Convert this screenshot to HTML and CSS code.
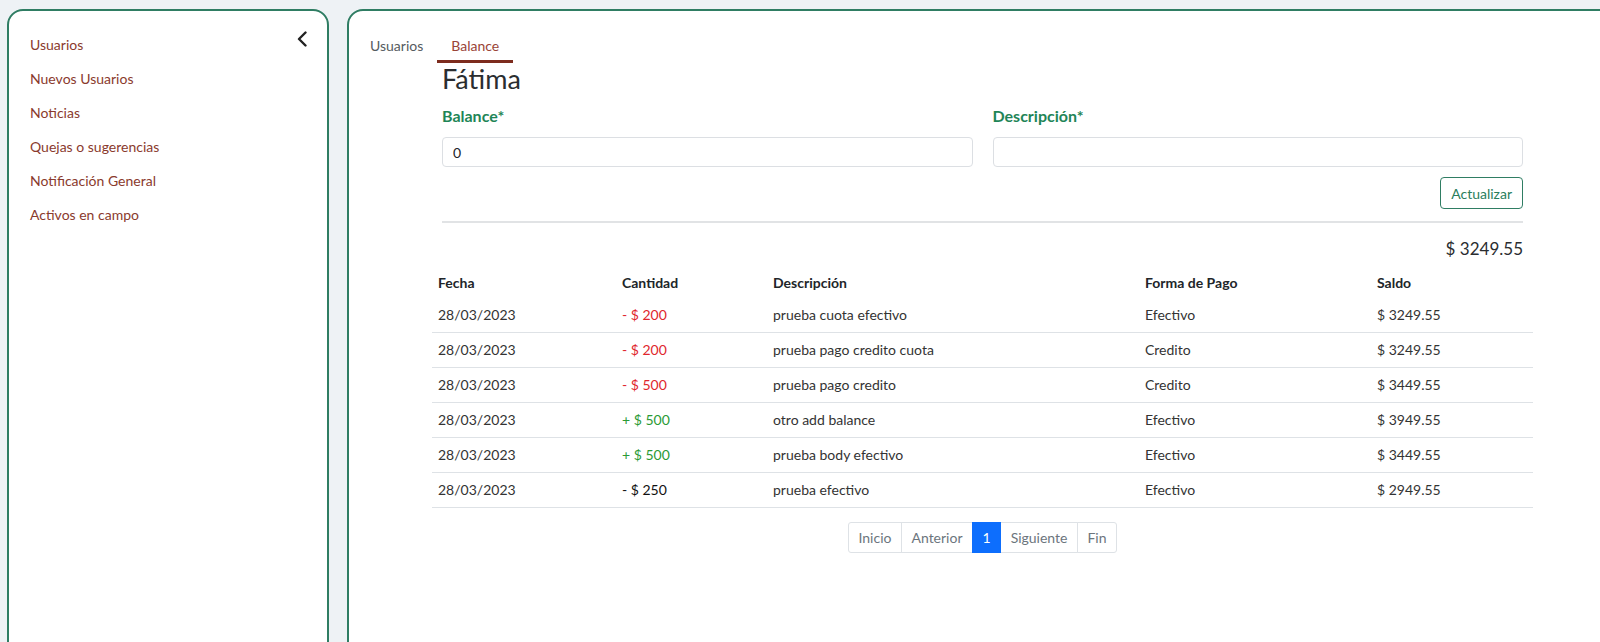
FILE: index.html
```html
<!DOCTYPE html>
<html lang="es">
<head>
<meta charset="utf-8">
<title>Balance</title>
<link rel="stylesheet" href="styles.css">
</head>
<body>
<div class="layout">
  <aside class="sidebar">
    <nav class="side-nav">
      <a href="#">Usuarios</a>
      <a href="#">Nuevos Usuarios</a>
      <a href="#">Noticias</a>
      <a href="#">Quejas o sugerencias</a>
      <a href="#">Notificación General</a>
      <a href="#">Activos en campo</a>
    </nav>
    <button class="collapse-btn" aria-label="Cerrar">
      <svg width="12" height="16" viewBox="0 0 12 16"><path d="M9.5 1.5 L3 8 L9.5 14.5" fill="none" stroke="#222" stroke-width="2.4" stroke-linecap="round" stroke-linejoin="round"/></svg>
    </button>
  </aside>
  <main class="main">
    <div class="tabs">
      <a class="tab" href="#">Usuarios</a>
      <a class="tab active" href="#">Balance</a>
    </div>
    <section class="content">
      <div class="form-area">
        <h3 class="name">Fátima</h3>
        <div class="form-row">
          <div class="field">
            <label class="label">Balance*</label>
            <input class="input" type="text" value="0">
          </div>
          <div class="field">
            <label class="label">Descripción*</label>
            <input class="input" type="text" value="">
          </div>
        </div>
        <div class="actions"><button class="btn-outline">Actualizar</button></div>
        <hr class="divider">
        <div class="total">$ 3249.55</div>
      </div>
      <table class="table">
        <colgroup>
          <col class="c1"><col class="c2"><col class="c3"><col class="c4"><col class="c5">
        </colgroup>
        <thead>
          <tr><th>Fecha</th><th>Cantidad</th><th>Descripción</th><th>Forma de Pago</th><th>Saldo</th></tr>
        </thead>
        <tbody>
          <tr><td>28/03/2023</td><td class="neg">- $ 200</td><td>prueba cuota efectivo</td><td>Efectivo</td><td>$ 3249.55</td></tr>
          <tr><td>28/03/2023</td><td class="neg">- $ 200</td><td>prueba pago credito cuota</td><td>Credito</td><td>$ 3249.55</td></tr>
          <tr><td>28/03/2023</td><td class="neg">- $ 500</td><td>prueba pago credito</td><td>Credito</td><td>$ 3449.55</td></tr>
          <tr><td>28/03/2023</td><td class="pos">+ $ 500</td><td>otro add balance</td><td>Efectivo</td><td>$ 3949.55</td></tr>
          <tr><td>28/03/2023</td><td class="pos">+ $ 500</td><td>prueba body efectivo</td><td>Efectivo</td><td>$ 3449.55</td></tr>
          <tr><td>28/03/2023</td><td class="plain">- $ 250</td><td>prueba efectivo</td><td>Efectivo</td><td>$ 2949.55</td></tr>
        </tbody>
      </table>
      <div class="pager-wrap">
        <ul class="pagination">
          <li><a href="#">Inicio</a></li>
          <li><a href="#">Anterior</a></li>
          <li class="active"><a href="#">1</a></li>
          <li><a href="#">Siguiente</a></li>
          <li><a href="#">Fin</a></li>
        </ul>
      </div>
    </section>
  </main>
</div>
</body>
</html>
```

FILE: styles.css
```css
* { box-sizing: border-box; }

html, body {
  margin: 0;
  padding: 0;
  height: 642px;
  overflow: hidden;
}

body {
  background: #eef2f5;
  font-family: Lato, "Noto Sans", "Liberation Sans", sans-serif;
  font-size: 14px;
  color: #212529;
}

.layout {
  display: flex;
  gap: 18px;
  padding: 9px 0 0 7px;
  width: 1700px;
}

.sidebar {
  flex: 0 0 322px;
  height: 720px;
  background: #fff;
  border: 2px solid #2f7d63;
  border-radius: 16px;
  padding: 17px 12px 0 21px;
  display: flex;
  align-items: flex-start;
}

.side-nav {
  flex: 1;
  display: flex;
  flex-direction: column;
}

.side-nav a {
  color: #8a3a2d;
  text-decoration: none;
  font-size: 14px;
  line-height: 34px;
  height: 34px;
}

.collapse-btn {
  background: none;
  border: 0;
  padding: 0;
  margin: 3px 7px 0 0;
  width: 12px;
  height: 16px;
  cursor: pointer;
  display: flex;
}

.main {
  flex: 0 0 1300px;
  height: 720px;
  background: #fff;
  border: 2px solid #2f7d63;
  border-radius: 16px;
  padding: 17px 0 0 7px;
}

.tabs {
  display: flex;
  align-items: flex-start;
  height: 35px;
}

.tab {
  display: block;
  padding: 7px 14px 4px;
  line-height: 21px;
  font-size: 14px;
  color: #555b60;
  text-decoration: none;
  border-bottom: 3px solid transparent;
}

.tab.active {
  color: #9a4437;
  border-bottom-color: #7d2c1e;
}

.content {
  margin-left: 76px;
  width: 1101px;
}

.form-area {
  padding: 0 10px;
}

.name {
  margin: 0;
  font-size: 27px;
  font-weight: 400;
  line-height: 31px;
  color: #2a2d30;
}

.form-row {
  display: grid;
  grid-template-columns: 1fr 1fr;
  gap: 20px;
  margin-top: 10px;
}

.field {
  display: flex;
  flex-direction: column;
}

.label {
  font-size: 16px;
  font-weight: 700;
  line-height: 24px;
  color: #1f8557;
  margin-bottom: 9px;
}

.input {
  height: 30px;
  border: 1px solid #dcdfe3;
  border-radius: 4px;
  padding: 0 10px;
  font: inherit;
  font-size: 14px;
  color: #212529;
}

.actions {
  display: flex;
  justify-content: flex-end;
  margin-top: 10px;
}

.btn-outline {
  height: 32px;
  padding: 0 10px;
  background: #fff;
  border: 1px solid #2f7d63;
  border-radius: 4px;
  color: #2a7d5c;
  font: inherit;
  font-size: 14px;
}

.divider {
  border: 0;
  border-top: 2px solid #e1e3e5;
  margin: 12px 0 0;
}

.total {
  text-align: right;
  font-size: 17px;
  line-height: 24px;
  margin-top: 14px;
  color: #2a2d30;
}

.table {
  width: 100%;
  border-collapse: collapse;
  margin-top: 6px;
  table-layout: fixed;
}

.c1 { width: 184px; }
.c2 { width: 151px; }
.c3 { width: 372px; }
.c4 { width: 232px; }
.c5 { width: 162px; }

.table th {
  text-align: left;
  font-weight: 700;
  color: #212529;
  padding: 5px 6px;
  line-height: 21px;
  height: 31px;
}

.table td {
  padding: 7px 6px;
  line-height: 20px;
  border-bottom: 1px solid #dee2e6;
  color: #333;
}

.table td.neg { color: #e0262d; }
.table td.pos { color: #2b9a35; }
.table td.plain { color: #111; }

.pager-wrap {
  display: flex;
  justify-content: center;
  margin-top: 14px;
}

.pagination {
  list-style: none;
  margin: 0;
  padding: 0;
  display: flex;
}

.pagination li a {
  display: block;
  padding: 4px 9.5px;
  line-height: 21px;
  font-size: 14px;
  color: #6c757d;
  text-decoration: none;
  border: 1px solid #dee2e6;
  margin-left: -1px;
  background: #fff;
}

.pagination li:first-child a {
  margin-left: 0;
  border-radius: 3px 0 0 3px;
}

.pagination li:last-child a {
  border-radius: 0 3px 3px 0;
}

.pagination li.active a {
  background: #0d6efd;
  border-color: #0d6efd;
  color: #fff;
  position: relative;
}
```
